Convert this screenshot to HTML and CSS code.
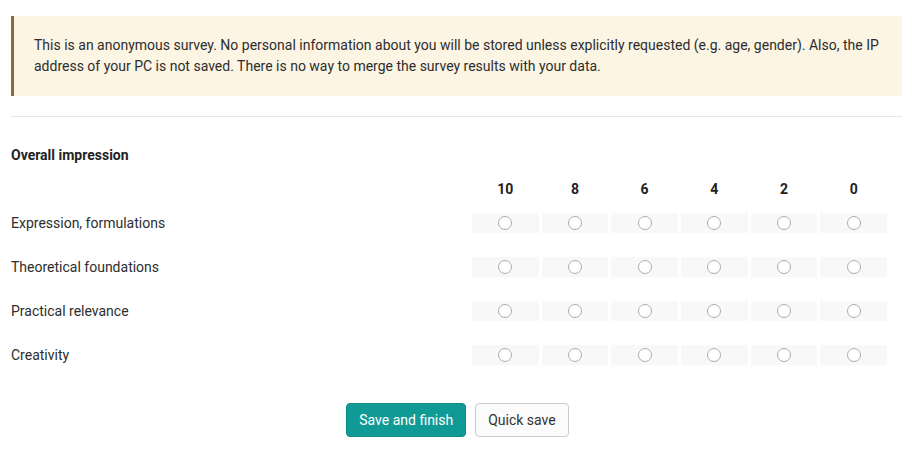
FILE: index.html
```html
<!DOCTYPE html>
<html lang="en">
<head>
<meta charset="utf-8">
<title>Survey</title>
<link rel="stylesheet" href="styles.css">
</head>
<body>
<main class="page">
  <div class="alert">This is an anonymous survey. No personal information about you will be stored unless explicitly requested (e.g. age, gender). Also, the IP address of your PC is not saved. There is no way to merge the survey results with your data.</div>
  <hr class="divider">
  <h3 class="section-title">Overall impression</h3>
  <div class="matrix">
    <div class="head-label"></div>
    <div class="head">10</div>
    <div class="head">8</div>
    <div class="head">6</div>
    <div class="head">4</div>
    <div class="head">2</div>
    <div class="head">0</div>

    <div class="label">Expression, formulations</div>
    <div class="cell"><span class="radio"></span></div>
    <div class="cell"><span class="radio"></span></div>
    <div class="cell"><span class="radio"></span></div>
    <div class="cell"><span class="radio"></span></div>
    <div class="cell"><span class="radio"></span></div>
    <div class="cell"><span class="radio"></span></div>

    <div class="label">Theoretical foundations</div>
    <div class="cell"><span class="radio"></span></div>
    <div class="cell"><span class="radio"></span></div>
    <div class="cell"><span class="radio"></span></div>
    <div class="cell"><span class="radio"></span></div>
    <div class="cell"><span class="radio"></span></div>
    <div class="cell"><span class="radio"></span></div>

    <div class="label">Practical relevance</div>
    <div class="cell"><span class="radio"></span></div>
    <div class="cell"><span class="radio"></span></div>
    <div class="cell"><span class="radio"></span></div>
    <div class="cell"><span class="radio"></span></div>
    <div class="cell"><span class="radio"></span></div>
    <div class="cell"><span class="radio"></span></div>

    <div class="label">Creativity</div>
    <div class="cell"><span class="radio"></span></div>
    <div class="cell"><span class="radio"></span></div>
    <div class="cell"><span class="radio"></span></div>
    <div class="cell"><span class="radio"></span></div>
    <div class="cell"><span class="radio"></span></div>
    <div class="cell"><span class="radio"></span></div>
  </div>
  <div class="actions">
    <button class="btn btn-primary">Save and finish</button>
    <button class="btn btn-default">Quick save</button>
  </div>
</main>
</body>
</html>
```

FILE: styles.css
```css
html, body {
  margin: 0;
  padding: 0;
  background: #fff;
}
body {
  font-family: Roboto, "Liberation Sans", Arial, sans-serif;
  font-size: 14px;
  color: #333;
}
.page {
  padding: 16px 10px 0 11px;
}
.alert {
  background: #fcf5e4;
  border-left: 3px solid #8c6a3e;
  padding: 19px 20px 19px 20px;
  line-height: 21px;
  font-size: 14px;
  color: #2d2d2d;
}
.divider {
  border: 0;
  border-top: 1px solid #e6e6e6;
  margin: 20px 0 0 0;
  height: 0;
}
.section-title {
  font-size: 14px;
  font-weight: 700;
  line-height: 20px;
  margin: 28px 0 0 0;
  color: #222;
}
.matrix {
  display: grid;
  grid-template-columns: 1fr repeat(6, 66.7px);
  column-gap: 3px;
  row-gap: 24px;
  margin: 13px 15px 0 0;
  align-items: center;
}
.head {
  text-align: center;
  font-weight: 700;
  line-height: 20px;
  color: #222;
  margin-bottom: -10px;
  margin-top: 1px;
}
.label {
  line-height: 20px;
  color: #2d2d2d;
}
.cell {
  height: 20px;
  background: #f8f8f8;
  display: flex;
  align-items: center;
  justify-content: center;
}
.radio {
  box-sizing: border-box;
  width: 14px;
  height: 14px;
  border: 1px solid #adadad;
  border-radius: 50%;
  background: #fff;
}
.actions {
  display: flex;
  justify-content: center;
  gap: 9px;
  margin-top: 38px;
  padding-left: 2px;
}
.btn {
  font-family: Roboto, "Liberation Sans", Arial, sans-serif;
  font-size: 14px;
  height: 34px;
  padding: 0 12px;
  border-radius: 4px;
  line-height: 20px;
}
.btn-primary {
  background: #109a95;
  border: 1px solid #0d8f8a;
  color: #fff;
}
.btn-default {
  background: #fbfbfb;
  border: 1px solid #ccc;
  color: #333;
}
```
